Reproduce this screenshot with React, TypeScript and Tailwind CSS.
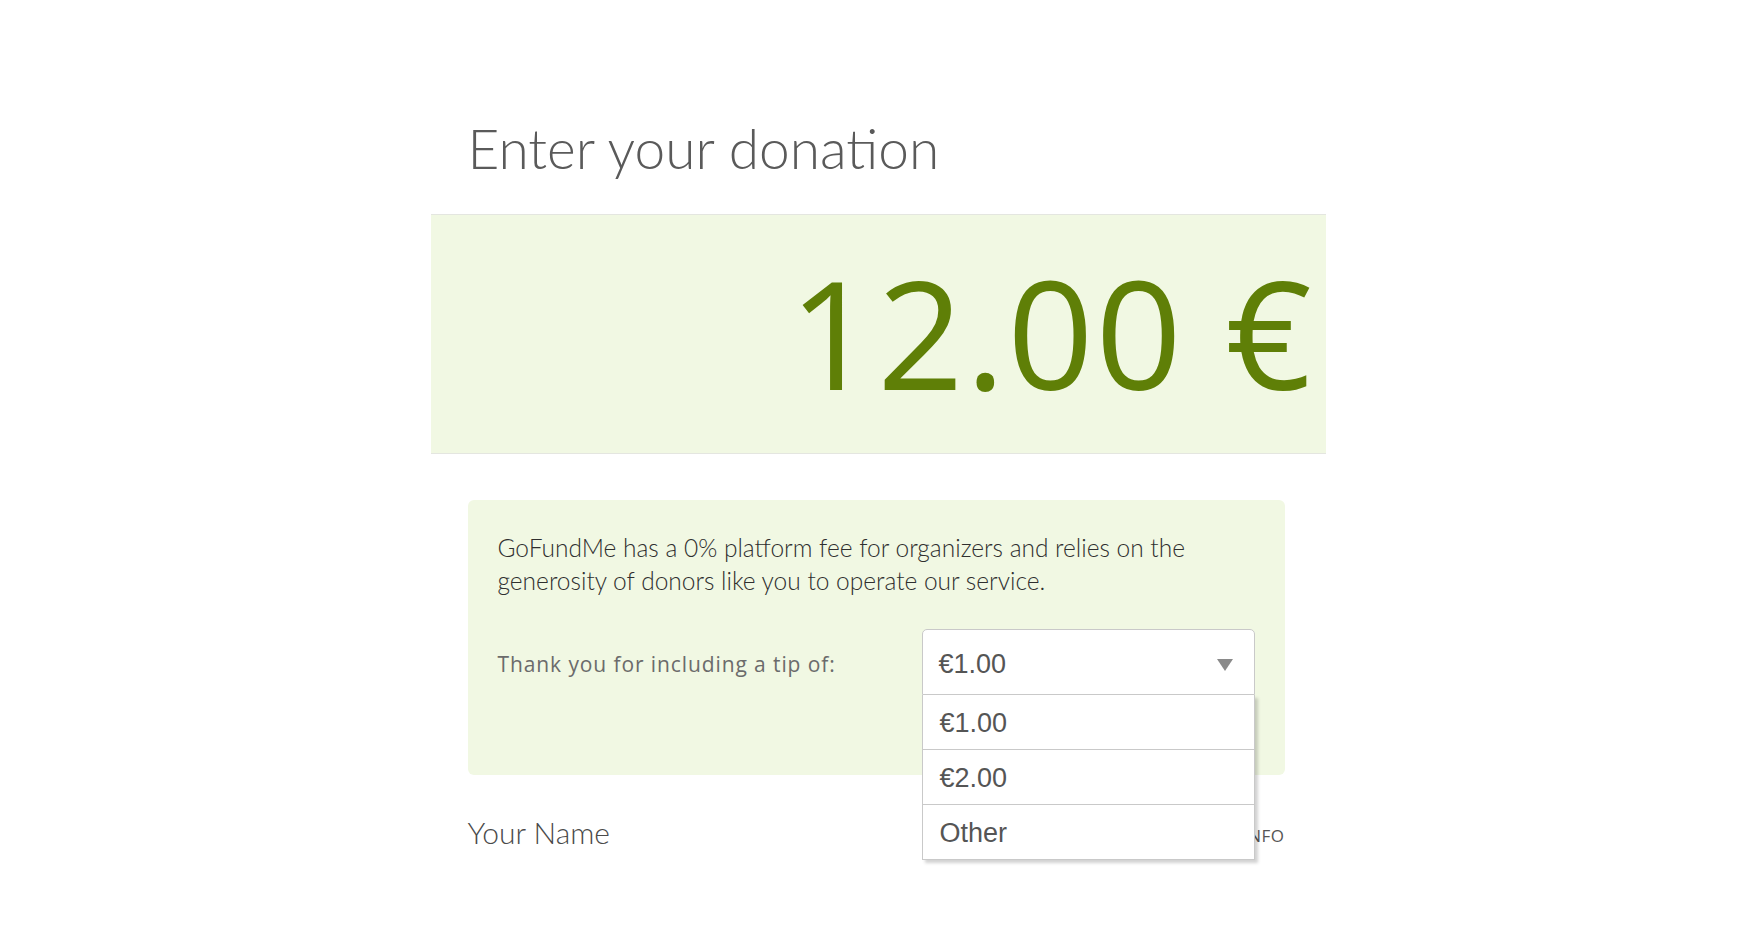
import React, { useState } from 'react';

const tipOptions = ['€1.00', '€2.00', 'Other'];

const lato = { fontFamily: 'Lato, "Open Sans", sans-serif' };

const App: React.FC = () => {
  const [tip, setTip] = useState('€1.00');
  const [open, setOpen] = useState(true);

  return (
    <div className="min-h-screen bg-white">
      <div className="mx-auto w-[895px] pt-[115px]">
        {/* Heading */}
        <h1
          className="pl-[37px] text-[55px] font-light leading-[1.2] text-[#5a5a5a]"
          style={lato}
        >
          Enter your donation
        </h1>

        {/* Amount band */}
        <div className="mt-[33px] flex h-[240px] items-center justify-end border-y border-[#e4e6e0] bg-[#f1f8e3] pr-[12px]">
          <span
            className="-mt-[6px] text-[151px] font-normal leading-none tracking-[2px] text-[#5f7f07]"
            style={{ fontFamily: '"Open Sans", sans-serif' }}
          >
            12.00 €
          </span>
        </div>

        {/* Tip box */}
        <div className="mt-[46px] ml-[37px] mr-[41px] rounded-md bg-[#f1f8e3] px-[30px] pt-[31px] pb-[80px]">
          <p className="text-[24.5px] font-light leading-[33px] text-[#2f2f2f]" style={lato}>
            GoFundMe has a 0% platform fee for organizers and relies on the generosity of donors like
            you to operate our service.
          </p>

          <div className="mt-[32px] flex items-center justify-between">
            <span
              className="mt-[6px] text-[21px] tracking-[0.9px] text-[#6b6b6b]"
              style={{ fontFamily: '"Open Sans", sans-serif' }}
            >
              Thank you for including a tip of:
            </span>

            <div className="relative z-10 w-[333px]" style={{ fontFamily: '"Liberation Sans", Arial, sans-serif' }}>
              <button
                type="button"
                onClick={() => setOpen(!open)}
                className="flex h-[66px] w-full items-center justify-between rounded-t-[5px] border border-[#c9c9c9] bg-white pl-[16px] pr-[21px] pt-[5px] text-left text-[27px] text-[#555555]"
              >
                <span>{tip}</span>
                <svg width="16" height="12" viewBox="0 0 16 12" className="mt-[1px]">
                  <path d="M0 0 L16 0 L8 12 Z" fill="#8a8a8a" />
                </svg>
              </button>

              {open && (
                <ul className="absolute left-0 top-full w-[333px] border-x border-[#c9c9c9] bg-white shadow-[3px_3px_3px_rgba(0,0,0,0.18)]">
                  {tipOptions.map((opt) => (
                    <li
                      key={opt}
                      onClick={() => {
                        setTip(opt);
                        setOpen(false);
                      }}
                      className="flex h-[55px] cursor-pointer items-center border-b border-[#c9c9c9] pl-[17px] pt-[2px] text-[27px] text-[#555555]"
                    >
                      {opt}
                    </li>
                  ))}
                </ul>
              )}
            </div>
          </div>
        </div>

        {/* Name row */}
        <div className="mt-[39px] ml-[37px] mr-[41px] flex items-center justify-between">
          <span className="text-[30px] font-light leading-[36px] text-[#4a4a4a]" style={lato}>
            Your Name
          </span>
          <span
            className="mt-[8px] text-[17px] tracking-[0.5px] text-[#555555]"
            style={{ fontFamily: '"Open Sans", sans-serif' }}
          >
            MORE INFO
          </span>
        </div>
      </div>
    </div>
  );
};

export default App;
